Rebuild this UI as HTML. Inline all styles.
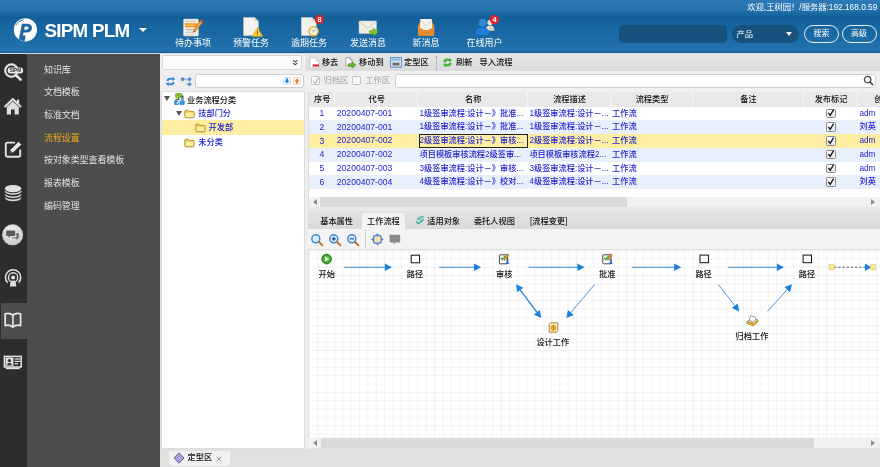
<!DOCTYPE html>
<html>
<head>
<meta charset="utf-8">
<title>SIPM PLM</title>
<style>
*{box-sizing:border-box;margin:0;padding:0}
html,body{width:880px;height:467px;overflow:hidden;background:#e4e4e4}
body{position:relative;font-family:"Liberation Sans","Noto Sans CJK SC",sans-serif;font-size:8.2px;color:#111;line-height:1;font-weight:500}
.a{position:absolute}
.t{position:absolute;white-space:nowrap;line-height:10px;height:10px}
/* header */
#hdr{left:0;top:0;width:880px;height:53px;background:linear-gradient(to bottom,#2d7ab6 0,#2773af 9px,#135f98 17px,#1968a3 31px,#2371ad 51px,#1c6097 52.4px,#1c6097 53px)}
#hline{left:0;top:53px;width:880px;height:1px;background:#cfe0ec}
.nav{position:absolute;font-weight:400;color:#fff;font-size:9px;line-height:10px;white-space:nowrap;top:37.6px;text-align:center}
/* sidebar */
#ibar{left:0;top:54px;width:27px;height:413px;background:#2d2d2d}
#menu{left:27px;top:54px;width:133px;height:413px;background:#4d4d4d}
.mi{position:absolute;font-weight:400;left:44px;font-size:9px;line-height:10px;color:#e2e2e2;white-space:nowrap;letter-spacing:-0.1px}
.blue{color:#1c1cd0}
.row{position:absolute;left:309px;width:571px;height:13.75px}
.row .t{top:2px}
.cb{position:absolute;left:826px;width:9.5px;height:9.5px;border:1px solid #8a8a8a;border-radius:1.5px;background:linear-gradient(#fff,#e6e6e6)}
.hd{position:absolute;top:92px;height:14.5px;background:#e9e9e9;border-right:1px solid #f6f6f6;text-align:center;line-height:16px;padding-left:1.6px;white-space:nowrap;overflow:hidden}
</style>
</head>
<body>
<div id="wrap" style="position:absolute;left:0;top:0;width:880px;height:467px;will-change:transform">
<!-- HEADER -->
<div class="a" id="hdr"></div>
<div class="a" id="hline"></div>
<!-- logo -->
<svg class="a" style="left:12px;top:16px" width="28" height="28" viewBox="0 0 28 28">
<circle cx="13.4" cy="13.8" r="11.6" fill="#fff"/>
<text x="7.4" y="21.4" font-family="Liberation Sans, sans-serif" font-size="18" font-weight="bold" font-style="italic" fill="#1f66a3" stroke="#1f66a3" stroke-width="0.7">P</text>
<path d="M8 19.6 L13.7 19.6 L12.5 25.6 L6.9 23.4 Z" fill="#1f66a3"/>
<path d="M3.6 9.2 Q6.6 4.6 11.4 3.6" stroke="#1f66a3" stroke-width="0.9" fill="none"/>
</svg>
<div class="a" style="left:44.5px;top:21px;font-size:18.8px;line-height:20px;font-weight:bold;color:#fff;white-space:nowrap;letter-spacing:-0.75px">SIPM PLM</div>
<div class="a" style="left:138.8px;top:28.2px;width:0;height:0;border-left:4.3px solid transparent;border-right:4.3px solid transparent;border-top:4.6px solid #fff"></div>
<!-- nav labels -->
<div class="nav" style="left:174.5px;width:37px">待办事项</div>
<div class="nav" style="left:232.5px;width:37px">预警任务</div>
<div class="nav" style="left:290.5px;width:37px">逾期任务</div>
<div class="nav" style="left:349.5px;width:37px">发送消息</div>
<div class="nav" style="left:412px;width:28px">新消息</div>
<div class="nav" style="left:466px;width:37px">在线用户</div>
<!-- nav icons -->
<svg class="a" style="left:182px;top:17px" width="24" height="22" viewBox="0 0 24 22">
<rect x="1.5" y="2" width="15" height="17" rx="1" fill="#f4f1ea" stroke="#c9c2b4" stroke-width="0.6"/>
<rect x="2.8" y="6.2" width="12.4" height="4.2" fill="#f59a23"/>
<line x1="3.5" y1="4.3" x2="14" y2="4.3" stroke="#b9b4a8" stroke-width="0.7"/>
<line x1="3.5" y1="8.3" x2="13" y2="8.3" stroke="#fbd9a6" stroke-width="0.7"/>
<line x1="3.5" y1="12.6" x2="11" y2="12.6" stroke="#8f8f8f" stroke-width="0.7"/>
<line x1="3.5" y1="15.2" x2="11" y2="15.2" stroke="#a8a8a8" stroke-width="0.7"/>
<line x1="3.5" y1="17.2" x2="12" y2="17.2" stroke="#c8c8c8" stroke-width="0.6"/>
<path d="M19.2 2.6 L21.4 4.4 L14 14 L11.6 15.2 L12 12.4 Z" fill="#f2a33a" stroke="#8a5a1c" stroke-width="0.5"/>
<path d="M19.2 2.6 L21.4 4.4 L20.3 5.8 L18.1 4 Z" fill="#d9362f"/>
<path d="M11.6 15.2 L12 13.6 L13 14.5 Z" fill="#333"/>
</svg>
<svg class="a" style="left:242px;top:16px" width="22" height="22" viewBox="0 0 22 22">
<path d="M1.6 1.4 L12.6 1.4 L16.4 5.2 L16.4 19.6 L1.6 19.6 Z" fill="#f3f2ee" stroke="#d4d2cc" stroke-width="0.5"/>
<path d="M12.6 1.4 L12.6 5.2 L16.4 5.2 Z" fill="#d9d7d0"/>
<path d="M15.4 11.6 L20.4 20.2 L10.4 20.2 Z" fill="#f7cf3c" stroke="#e0a820" stroke-width="0.8" stroke-linejoin="round"/>
<rect x="14.9" y="14.6" width="1" height="2.8" fill="#7a5a10"/>
<rect x="14.9" y="18" width="1" height="1" fill="#7a5a10"/>
</svg>
<svg class="a" style="left:300px;top:14px" width="26" height="24" viewBox="0 0 26 24">
<path d="M1.4 3.6 L12 3.6 L16.2 7.6 L16.2 21.6 L1.4 21.6 Z" fill="#f3f2ee" stroke="#d4d2cc" stroke-width="0.5"/>
<path d="M12 3.6 L12 7.6 L16.2 7.6 Z" fill="#d9d7d0"/>
<circle cx="13.6" cy="17.2" r="4.6" fill="#f2f0ea" stroke="#e8a423" stroke-width="1.4"/>
<path d="M11.8 15.6 L13.6 17.6 L15.6 15.8" stroke="#8a8a9a" stroke-width="0.9" fill="none"/>
<circle cx="19.4" cy="5.4" r="4.6" fill="#e0242b"/>
<text x="19.4" y="8" font-size="7.2" font-weight="bold" fill="#fff" text-anchor="middle" font-family="Liberation Sans, sans-serif">8</text>
</svg>
<svg class="a" style="left:358px;top:19px" width="22" height="18" viewBox="0 0 22 18">
<rect x="1" y="2" width="17.4" height="12.6" rx="0.8" fill="#f1efe9" stroke="#cfccc4" stroke-width="0.6"/>
<path d="M1.4 2.4 L9.7 9.4 L18 2.4" stroke="#c4c0b6" stroke-width="0.8" fill="none"/>
<path d="M1.4 14.2 L7.4 8.2 M18 14.2 L12 8.2" stroke="#dad7cf" stroke-width="0.6" fill="none"/>
<path d="M11.4 11.4 L15.4 11.4 L15.4 9 L20.2 13 L15.4 17 L15.4 14.6 L11.4 14.6 Z" fill="#7cc22a" stroke="#5a9a14" stroke-width="0.5"/>
</svg>
<svg class="a" style="left:416px;top:17px" width="20" height="20" viewBox="0 0 20 20">
<path d="M2 9 L2 17.4 Q2 18.8 3.4 18.8 L16.8 18.8 Q18.2 18.8 18.2 17.4 L18.2 9 L15.6 3 L4.6 3 Z" fill="#e8923a"/>
<path d="M4.2 3 Q4.2 2 5.2 2 L15 2 Q16 2 16 3 L16 13 L4.2 13 Z" fill="#f4f2ec"/>
<path d="M4.6 3 L10.1 9.6 L15.6 3" stroke="#d0cdc4" stroke-width="0.8" fill="none"/>
<path d="M2 11.4 L6.6 11.4 L7.8 13.6 L12.4 13.6 L13.6 11.4 L18.2 11.4 L18.2 17.4 Q18.2 18.8 16.8 18.8 L3.4 18.8 Q2 18.8 2 17.4 Z" fill="#e58a30"/>
</svg>
<svg class="a" style="left:474px;top:14px" width="28" height="24" viewBox="0 0 28 24">
<circle cx="16" cy="8.6" r="2.6" fill="#f1e6d6"/>
<path d="M11.6 16.4 Q11.8 11.6 16 11.6 Q20.2 11.6 20.4 16.4 Z" fill="#e9e4dc"/>
<rect x="15.4" y="13.4" width="4.4" height="3" fill="#d9cdb8"/>
<circle cx="8.6" cy="8.8" r="4" fill="#2f86d6"/>
<path d="M1.6 19.6 Q1.8 13.4 8.6 13.4 Q15.4 13.4 15.6 19.6 Q8.6 22.6 1.6 19.6 Z" fill="#1f7fd8"/>
<circle cx="20.4" cy="5.6" r="4.6" fill="#e0242b"/>
<text x="20.4" y="8.2" font-size="7.2" font-weight="bold" fill="#fff" text-anchor="middle" font-family="Liberation Sans, sans-serif">4</text>
</svg>
<!-- header right -->
<div class="a" style="right:2.7px;top:1.6px;font-weight:400;font-size:8.3px;line-height:10px;color:#fff;white-space:nowrap">欢迎,王树园！/服务器:192.168.0.59</div>
<div class="a" style="left:619px;top:25px;width:108px;height:18px;border-radius:5px;background:#17527f"></div>
<div class="a" style="left:732px;top:25px;width:67px;height:18px;border-radius:9px;background:#17527f"></div>
<div class="a" style="left:736.4px;top:29px;font-weight:400;font-size:8.3px;line-height:10px;color:#fff">产品</div>
<div class="a" style="left:786.2px;top:31.6px;width:0;height:0;border-left:3.9px solid transparent;border-right:3.9px solid transparent;border-top:4.8px solid #f2f2f2"></div>
<div class="a" style="left:804px;top:25px;width:35px;height:18px;border-radius:9px;border:1px solid #e8eef4;color:#fff;font-weight:400;font-size:8px;line-height:16px;text-align:center">搜索</div>
<div class="a" style="left:841.5px;top:25px;width:35px;height:18px;border-radius:9px;border:1px solid #e8eef4;color:#fff;font-weight:400;font-size:8px;line-height:16px;text-align:center">高级</div>
<!-- SIDEBAR -->
<div class="a" id="ibar"></div>
<div class="a" id="menu"></div>
<div class="a" style="left:1px;top:302.5px;width:26px;height:36.5px;background:#4d4d4d"></div>
<!-- sidebar icons -->
<svg class="a" style="left:2px;top:61px" width="24" height="21" viewBox="0 0 24 21">
<circle cx="9.4" cy="9.6" r="6.2" fill="none" stroke="#e4e4e4" stroke-width="2.2"/>
<line x1="14" y1="14.2" x2="18.6" y2="18.6" stroke="#e4e4e4" stroke-width="2.6" stroke-linecap="round"/>
<rect x="5.6" y="6.4" width="15.6" height="6" rx="3" fill="#e8e8e8"/>
<text x="13.4" y="11.2" font-size="4.6" font-weight="bold" fill="#333" text-anchor="middle" font-family="Liberation Sans, sans-serif">SIPM</text>
</svg>
<svg class="a" style="left:3px;top:97px" width="20" height="19" viewBox="0 0 20 19">
<path d="M1.6 10 L9.8 2.2 L18 10" stroke="#e0e0e0" stroke-width="2.2" fill="none" stroke-linejoin="miter"/>
<path d="M3.8 10 L9.8 4.6 L15.8 10 L15.8 17.6 L11.6 17.6 L11.6 12.4 L8 12.4 L8 17.6 L3.8 17.6 Z" fill="#e0e0e0"/>
<rect x="14" y="2.6" width="2.2" height="4" fill="#e0e0e0"/>
</svg>
<svg class="a" style="left:3px;top:139px" width="21" height="20" viewBox="0 0 21 20">
<path d="M12 3.6 L4.6 3.6 Q2.8 3.6 2.8 5.4 L2.8 16 Q2.8 17.8 4.6 17.8 L15.4 17.8 Q17.2 17.8 17.2 16 L17.2 10.6" stroke="#e4e4e4" stroke-width="1.9" fill="none"/>
<path d="M15.4 2.4 L18.8 5.6 L10.4 13.6 L6.4 14.8 L7.4 10.6 Z" fill="#e4e4e4" stroke="#2b2b2b" stroke-width="0.7"/>
<path d="M7.2 14 L7.8 11.8 L9.4 13.4 Z" fill="#2b2b2b"/>
</svg>
<svg class="a" style="left:3px;top:183px" width="20" height="20" viewBox="0 0 20 20">
<ellipse cx="10.1" cy="14.6" rx="8.2" ry="3.6" fill="#d8d8d8"/>
<ellipse cx="10.1" cy="13.2" rx="8.2" ry="3.4" fill="#2b2b2b"/>
<ellipse cx="10.1" cy="11.4" rx="8.2" ry="3.6" fill="#d8d8d8"/>
<ellipse cx="10.1" cy="10" rx="8.2" ry="3.4" fill="#2b2b2b"/>
<ellipse cx="10.1" cy="8.2" rx="8.2" ry="3.6" fill="#d8d8d8"/>
<ellipse cx="10.1" cy="6.8" rx="8.2" ry="3.4" fill="#2b2b2b"/>
<ellipse cx="10.1" cy="5.6" rx="8.2" ry="3.6" fill="#e2e2e2"/>
</svg>
<svg class="a" style="left:1px;top:223px" width="24" height="24" viewBox="0 0 24 24">
<defs><radialGradient id="cg" cx="0.45" cy="0.35" r="0.7"><stop offset="0" stop-color="#f4f4f4"/><stop offset="1" stop-color="#c4c4c4"/></radialGradient></defs>
<circle cx="11.6" cy="11.8" r="10.5" fill="url(#cg)"/>
<path d="M6 7.4 L13.4 7.4 Q14.2 7.4 14.2 8.2 L14.2 12.2 Q14.2 13 13.4 13 L9.6 13 L7.6 15 L7.6 13 L6 13 Q5.2 13 5.2 12.2 L5.2 8.2 Q5.2 7.4 6 7.4 Z" fill="#5a5a5a"/>
<path d="M15.4 10 L17 10 Q17.8 10 17.8 10.8 L17.8 14.4 Q17.8 15.2 17 15.2 L16.2 15.2 L16.2 17 L14.4 15.2 L11.4 15.2 L11.4 14.2 L15.4 14.2 Z" fill="#6a6a6a"/>
</svg>
<svg class="a" style="left:3px;top:267px" width="20" height="21" viewBox="0 0 20 21">
<circle cx="10.1" cy="10.4" r="7.6" fill="none" stroke="#e0e0e0" stroke-width="1.6"/>
<circle cx="10.1" cy="10.4" r="4.6" fill="none" stroke="#e0e0e0" stroke-width="1.4"/>
<rect x="4.6" y="15" width="11" height="6" fill="#2b2b2b"/>
<circle cx="10.1" cy="10.6" r="2" fill="#e0e0e0"/>
<path d="M6.8 19.4 L7.6 14.6 Q7.8 13.4 10.1 13.4 Q12.4 13.4 12.6 14.6 L13.4 19.4 Z" fill="#e0e0e0"/>
</svg>
<svg class="a" style="left:3px;top:310px" width="20" height="20" viewBox="0 0 20 20">
<path d="M2.2 3.8 Q6.4 2.4 9.9 5 Q13.4 2.4 17.6 3.8 L17.6 15.6 Q13.4 14.4 9.9 17 Q6.4 14.4 2.2 15.6 Z" fill="none" stroke="#e8e8e8" stroke-width="1.7" stroke-linejoin="round"/>
<line x1="9.9" y1="5" x2="9.9" y2="17.4" stroke="#e8e8e8" stroke-width="1.6"/>
</svg>
<svg class="a" style="left:3px;top:355px" width="20" height="16" viewBox="0 0 20 16">
<rect x="1.4" y="1.4" width="16.8" height="10.6" fill="none" stroke="#e6e6e6" stroke-width="1.5"/>
<rect x="2.6" y="2.6" width="7.8" height="8.4" fill="#e6e6e6"/>
<circle cx="6.4" cy="5.6" r="1.7" fill="#3a3a3a"/>
<path d="M3.8 10.4 Q4 7.8 6.4 7.8 Q8.8 7.8 9 10.4 Z" fill="#3a3a3a"/>
<rect x="11.6" y="3.4" width="5.6" height="1.2" fill="#e6e6e6"/>
<rect x="11.6" y="5.8" width="5.6" height="1.2" fill="#e6e6e6"/>
<rect x="11.6" y="8.2" width="3.6" height="1.2" fill="#e6e6e6"/>
<rect x="3" y="12.6" width="13.6" height="1.6" fill="#e6e6e6"/>
</svg>
<!-- menu text -->
<div class="mi" style="top:64.5px">知识库</div>
<div class="mi" style="top:87.2px">文档模板</div>
<div class="mi" style="top:109.9px">标准文档</div>
<div class="mi" style="top:132.6px;color:#f2a91c">流程设置</div>
<div class="mi" style="top:155.3px">按对象类型查看模板</div>
<div class="mi" style="top:178px">报表模板</div>
<div class="mi" style="top:200.7px">编码管理</div>
<!-- MAIN -->
<div class="a" id="main"></div>
<!-- left panel -->
<div class="a" style="left:160px;top:54px;width:145px;height:38px;background:#eee"></div>
<div class="a" style="left:162.4px;top:55px;width:140px;height:14.7px;background:#fbfbfb;border:1px solid #d6d6d6;border-radius:2px"></div>
<svg class="a" style="left:292.2px;top:59.3px" width="6.8" height="7.6" viewBox="0 0 8 9"><path d="M1.2 1.2 L3.8 3.6 L6.4 1.2 M1.2 4.6 L3.8 7 L6.4 4.6" stroke="#4a4a4a" stroke-width="1.2" fill="none"/></svg>
<svg class="a" style="left:165px;top:75.5px" width="11" height="11" viewBox="0 0 11 11">
<path d="M1.4 4.6 Q2.4 1.6 5.6 1.8 L7.4 2.2 L7.4 0.6 L10 3.2 L7.4 5 L7.4 3.8 Q4.4 3 3 5.2 Z" fill="#2b86e0"/>
<path d="M9.6 6.4 Q8.6 9.4 5.4 9.2 L3.6 8.8 L3.6 10.4 L1 7.8 L3.6 6 L3.6 7.2 Q6.6 8 8 5.8 Z" fill="#2b86e0"/>
</svg>
<svg class="a" style="left:180px;top:75.5px" width="12" height="11" viewBox="0 0 12 11">
<path d="M3.6 3.2 L8.4 3.2 M6 3.2 L6 8.2 L8.4 8.2" stroke="#9ab0c8" stroke-width="0.8" fill="none"/>
<rect x="5.2" y="4.4" width="2.6" height="3.6" fill="#e2e2e2"/>
<circle cx="2.6" cy="3.2" r="1.5" fill="#5a94e4" stroke="#2f6cc8" stroke-width="0.6"/>
<circle cx="9.5" cy="3.2" r="1.5" fill="#5a94e4" stroke="#2f6cc8" stroke-width="0.6"/>
<circle cx="9.5" cy="8.2" r="1.5" fill="#5a94e4" stroke="#2f6cc8" stroke-width="0.6"/>
</svg>
<div class="a" style="left:194.6px;top:73.7px;width:109px;height:14px;background:#fff;border:1px solid #cdcdcd;border-radius:3px"></div>
<svg class="a" style="left:282.6px;top:77px" width="8" height="8" viewBox="0 0 8 8"><rect x="0.4" y="0.4" width="7.2" height="7.2" rx="1" fill="#eef4fb" stroke="#b9c9dc" stroke-width="0.6"/><path d="M3 1.4 L5 1.4 L5 3.8 L6.4 3.8 L4 6.6 L1.6 3.8 L3 3.8 Z" fill="#1e88e0"/></svg>
<svg class="a" style="left:293px;top:77px" width="8" height="8" viewBox="0 0 8 8"><rect x="0.4" y="0.4" width="7.2" height="7.2" rx="1" fill="#fdf3ea" stroke="#dcc9b9" stroke-width="0.6"/><path d="M3 6.6 L5 6.6 L5 4.2 L6.4 4.2 L4 1.4 L1.6 4.2 L3 4.2 Z" fill="#f57a14"/></svg>
<!-- tree -->
<div class="a" style="left:161px;top:91px;width:143.6px;height:357.5px;background:#fff;border:1px solid #dcdcdc"></div>
<div class="a" style="left:161.8px;top:120px;width:142px;height:14.6px;background:#fdeea2"></div>
<div class="a" style="left:164.1px;top:96.2px;width:0;height:0;border-left:3.2px solid transparent;border-right:3.2px solid transparent;border-top:5.4px solid #555"></div>
<div class="a" style="left:175.7px;top:110.5px;width:0;height:0;border-left:3.2px solid transparent;border-right:3.2px solid transparent;border-top:5.4px solid #555"></div>
<svg class="a" style="left:173.6px;top:93px" width="11" height="12.4" viewBox="0 0 11 12.4">
<rect x="1.5" y="0.5" width="6.4" height="4.3" rx="1" fill="#84cc2e" stroke="#4f9a1c" stroke-width="0.6"/>
<rect x="2.8" y="1.7" width="3.6" height="0.9" fill="#5aa81e"/>
<path d="M4.6 4.8 L4.6 6.4 L1.8 6.4 L1.8 7.6 M4.6 6.4 L8 6.4 L8 3 L9 3 L9 7.6" stroke="#2a2a3a" stroke-width="0.8" fill="none"/>
<rect x="0.5" y="7.7" width="4.3" height="4" rx="0.6" fill="#2f9ae8" stroke="#1a6fc0" stroke-width="0.5"/>
<rect x="6" y="7.7" width="4.3" height="4" rx="0.6" fill="#2f9ae8" stroke="#1a6fc0" stroke-width="0.5"/>
<path d="M3 10.6 L7.4 5.4" stroke="#f4f6fa" stroke-width="1.2"/>
</svg>
<div class="t" style="left:187px;top:95.5px">业务流程分类</div>
<svg class="a" style="left:184.4px;top:109px" width="11" height="10" viewBox="0 0 11 10"><path d="M0.8 2.2 Q0.8 1.2 1.8 1.2 L4 1.2 L5 2.4 L9.2 2.4 Q10.2 2.4 10.2 3.4 L10.2 7.8 Q10.2 8.8 9.2 8.8 L1.8 8.8 Q0.8 8.8 0.8 7.8 Z" fill="#efcf58" stroke="#b48c24" stroke-width="0.9"/><rect x="1.7" y="3.7" width="7.6" height="4.3" rx="0.6" fill="#fbeb9c"/></svg>
<div class="t blue" style="left:198.3px;top:109.3px">技部门分</div>
<svg class="a" style="left:195px;top:123.4px" width="11" height="10" viewBox="0 0 11 10"><path d="M0.8 2.2 Q0.8 1.2 1.8 1.2 L4 1.2 L5 2.4 L9.2 2.4 Q10.2 2.4 10.2 3.4 L10.2 7.8 Q10.2 8.8 9.2 8.8 L1.8 8.8 Q0.8 8.8 0.8 7.8 Z" fill="#efcf58" stroke="#b48c24" stroke-width="0.9"/><rect x="1.7" y="3.7" width="7.6" height="4.3" rx="0.6" fill="#fbeb9c"/></svg>
<div class="t blue" style="left:208.6px;top:123.4px">开发部</div>
<svg class="a" style="left:184.4px;top:137.8px" width="11" height="10" viewBox="0 0 11 10"><path d="M0.8 2.2 Q0.8 1.2 1.8 1.2 L4 1.2 L5 2.4 L9.2 2.4 Q10.2 2.4 10.2 3.4 L10.2 7.8 Q10.2 8.8 9.2 8.8 L1.8 8.8 Q0.8 8.8 0.8 7.8 Z" fill="#efcf58" stroke="#b48c24" stroke-width="0.9"/><rect x="1.7" y="3.7" width="7.6" height="4.3" rx="0.6" fill="#fbeb9c"/></svg>
<div class="t blue" style="left:198.3px;top:137.9px">未分类</div>
<!-- right toolbar -->
<div class="a" style="left:305px;top:54px;width:575px;height:17px;background:linear-gradient(#e5e5e5,#dbdbdb)"></div>
<div class="a" style="left:305px;top:71px;width:575px;height:20.5px;background:#f0f0f0"></div>
<div class="a" style="left:303.6px;top:54px;width:1.4px;height:17px;background:#f4f4f4"></div>
<svg class="a" style="left:309px;top:57px" width="11" height="12" viewBox="0 0 11 12"><path d="M1 0.8 L7 0.8 L9.8 3.6 L9.8 11 L1 11 Z" fill="#fff" stroke="#b8b8b8" stroke-width="0.7"/><path d="M7 0.8 L7 3.6 L9.8 3.6" fill="#e4e4e4" stroke="#b8b8b8" stroke-width="0.6"/><rect x="3.6" y="7.4" width="6.4" height="2.2" fill="#e02a2a"/></svg>
<div class="t" style="left:321.9px;top:58px">移去</div>
<svg class="a" style="left:345px;top:57px" width="12" height="12" viewBox="0 0 12 12"><path d="M0.8 0.6 L4.8 0.6 L7 2.8 L7 8.4 L0.8 8.4 Z" fill="#fff" stroke="#8a8a8a" stroke-width="0.7"/><path d="M4.8 0.6 L4.8 2.8 L7 2.8" fill="none" stroke="#8a8a8a" stroke-width="0.6"/><path d="M3.4 6.8 L7 6.8 L7 4.8 L10.8 8 L7 11.2 L7 9.2 L3.4 9.2 Z" fill="#5fc224" stroke="#2f7a10" stroke-width="0.6"/></svg>
<div class="t" style="left:359px;top:58px">移动到</div>
<svg class="a" style="left:390px;top:57px" width="12" height="11" viewBox="0 0 12 11"><rect x="0.6" y="0.6" width="10.8" height="9.6" fill="#dbe9f8" stroke="#4a86c8" stroke-width="0.9"/><rect x="1.6" y="1.6" width="8.8" height="2" fill="#7fb2e6"/><rect x="2" y="5" width="8" height="4.4" fill="#b8b8b8"/><rect x="3" y="6" width="6" height="2.2" fill="#6a6a6a"/></svg>
<div class="t" style="left:404px;top:58px">定型区</div>
<div class="a" style="left:436px;top:56px;width:0;height:14px;border-left:1px dotted #9a9a9a"></div>
<svg class="a" style="left:442px;top:57.4px" width="11" height="11" viewBox="0 0 11 11">
<path d="M1.2 4.8 Q2.2 1.4 5.6 1.6 L7.2 2 L7.2 0.4 L10 3.2 L7.2 5.2 L7.2 3.9 Q4.4 3 3.2 5.4 Z" fill="#3fb838"/>
<path d="M9.8 6.2 Q8.8 9.6 5.4 9.4 L3.8 9 L3.8 10.6 L1 7.8 L3.8 5.8 L3.8 7.1 Q6.6 8 7.8 5.6 Z" fill="#3fb838"/>
</svg>
<div class="t" style="left:456px;top:58px">刷新</div>
<div class="t" style="left:479.6px;top:58px">导入流程</div>
<!-- filter row -->
<div class="a" style="left:311.2px;top:76.3px;width:9px;height:9px;border:1px solid #c2c2c2;border-radius:1.5px;background:#f8f8f8"><svg width="8" height="8" viewBox="0 0 8 8" style="position:absolute;left:-0.3px;top:-0.8px"><path d="M1.4 3.8 L3.2 6.4 L6.6 0.6" stroke="#b4b4b4" stroke-width="1.1" fill="none"/></svg></div>
<div class="t" style="left:323.7px;top:76px;color:#b0b0b0">归档区</div>
<div class="a" style="left:352.3px;top:76.3px;width:9px;height:9px;border:1px solid #c2c2c2;border-radius:1.5px;background:#f8f8f8"></div>
<div class="t" style="left:365.4px;top:76px;color:#b0b0b0">工作区</div>
<div class="a" style="left:394.5px;top:73.6px;width:481px;height:14px;background:#fff;border:1px solid #cdcdcd;border-radius:3px"></div>
<svg class="a" style="left:863px;top:75.4px" width="11" height="11" viewBox="0 0 11 11"><circle cx="4.6" cy="4.6" r="3.2" fill="none" stroke="#444" stroke-width="1.3"/><line x1="7" y1="7" x2="9.6" y2="9.6" stroke="#444" stroke-width="1.7" stroke-linecap="round"/></svg>
<div class="a" style="left:305px;top:91.5px;width:3.6px;height:357.5px;background:#eee"></div>
<!-- table -->
<div class="a" style="left:308.4px;top:91.5px;width:572px;height:116px;background:#fff;border:1px solid #dcdcdc;border-right:0"></div>
<div class="a" style="left:309px;top:92px;width:571px;height:14.5px;background:#e9e9e9"></div>
<div class="hd" style="left:309px;width:26px">序号</div><div class="hd" style="left:335px;width:83px">代号</div><div class="hd" style="left:418px;width:110px">名称</div><div class="hd" style="left:528px;width:82.5px">流程描述</div><div class="hd" style="left:610.5px;width:82.5px">流程类型</div><div class="hd" style="left:693px;width:110.5px">备注</div><div class="hd" style="left:803.5px;width:54.5px">发布标记</div><div class="hd" style="left:858px;width:55.6px;border-right:0">创建者</div>

<div class="row blue" style="top:106.5px;background:#fff"><div class="t" style="left:0;width:26px;text-align:center;font-size:8.6px;top:1.6px">1</div><div class="t" style="left:27.8px;font-size:8.6px;top:1.4px">20200407-001</div><div class="t" style="left:110.5px">1级签审流程:设计－》批准...</div><div class="t" style="left:220.4px">1级签审流程:设计－...</div><div class="t" style="left:303px">工作流</div><div class="t" style="left:550.5px">adm</div></div>
<div class="cb" style="top:108.7px"><svg width="8" height="8" viewBox="0 0 8 8" style="position:absolute;left:0;top:-0.5px"><path d="M1.4 3.8 L3.2 6.4 L6.6 0.6" stroke="#111" stroke-width="1.3" fill="none"/></svg></div>
<div class="row blue" style="top:120.25px;background:#e8f0fb"><div class="t" style="left:0;width:26px;text-align:center;font-size:8.6px;top:1.6px">2</div><div class="t" style="left:27.8px;font-size:8.6px;top:1.4px">20200407-001</div><div class="t" style="left:110.5px">1级签审流程:设计－》批准...</div><div class="t" style="left:220.4px">1级签审流程:设计－...</div><div class="t" style="left:303px">工作流</div><div class="t" style="left:550.5px">刘英</div></div>
<div class="cb" style="top:122.45px"><svg width="8" height="8" viewBox="0 0 8 8" style="position:absolute;left:0;top:-0.5px"><path d="M1.4 3.8 L3.2 6.4 L6.6 0.6" stroke="#111" stroke-width="1.3" fill="none"/></svg></div>
<div class="row blue" style="top:134.0px;background:#fdeea2"><div class="t" style="left:0;width:26px;text-align:center;font-size:8.6px;top:1.6px">3</div><div class="t" style="left:27.8px;font-size:8.6px;top:1.4px">20200407-002</div><div class="t" style="left:110.5px">2级签审流程:设计－》审核...</div><div class="t" style="left:220.4px">2级签审流程:设计－...</div><div class="t" style="left:303px">工作流</div><div class="t" style="left:550.5px">adm</div></div>
<div class="cb" style="top:136.2px"><svg width="8" height="8" viewBox="0 0 8 8" style="position:absolute;left:0;top:-0.5px"><path d="M1.4 3.8 L3.2 6.4 L6.6 0.6" stroke="#111" stroke-width="1.3" fill="none"/></svg></div>
<div class="row blue" style="top:147.75px;background:#e8f0fb"><div class="t" style="left:0;width:26px;text-align:center;font-size:8.6px;top:1.6px">4</div><div class="t" style="left:27.8px;font-size:8.6px;top:1.4px">20200407-002</div><div class="t" style="left:110.5px">项目模板审核流程2级签审...</div><div class="t" style="left:220.4px">项目模板审核流程2...</div><div class="t" style="left:303px">工作流</div><div class="t" style="left:550.5px">adm</div></div>
<div class="cb" style="top:149.95px"><svg width="8" height="8" viewBox="0 0 8 8" style="position:absolute;left:0;top:-0.5px"><path d="M1.4 3.8 L3.2 6.4 L6.6 0.6" stroke="#111" stroke-width="1.3" fill="none"/></svg></div>
<div class="row blue" style="top:161.5px;background:#fff"><div class="t" style="left:0;width:26px;text-align:center;font-size:8.6px;top:1.6px">5</div><div class="t" style="left:27.8px;font-size:8.6px;top:1.4px">20200407-003</div><div class="t" style="left:110.5px">3级签审流程:设计－》审核...</div><div class="t" style="left:220.4px">3级签审流程:设计－...</div><div class="t" style="left:303px">工作流</div><div class="t" style="left:550.5px">adm</div></div>
<div class="cb" style="top:163.7px"><svg width="8" height="8" viewBox="0 0 8 8" style="position:absolute;left:0;top:-0.5px"><path d="M1.4 3.8 L3.2 6.4 L6.6 0.6" stroke="#111" stroke-width="1.3" fill="none"/></svg></div>
<div class="row blue" style="top:175.25px;background:#e8f0fb"><div class="t" style="left:0;width:26px;text-align:center;font-size:8.6px;top:1.6px">6</div><div class="t" style="left:27.8px;font-size:8.6px;top:1.4px">20200407-004</div><div class="t" style="left:110.5px">4级签审流程:设计－》校对...</div><div class="t" style="left:220.4px">4级签审流程:设计－...</div><div class="t" style="left:303px">工作流</div><div class="t" style="left:550.5px">刘英</div></div>
<div class="cb" style="top:177.45px"><svg width="8" height="8" viewBox="0 0 8 8" style="position:absolute;left:0;top:-0.5px"><path d="M1.4 3.8 L3.2 6.4 L6.6 0.6" stroke="#111" stroke-width="1.3" fill="none"/></svg></div>

<div class="a" style="left:419px;top:134.4px;width:109.2px;height:13.4px;border:1px solid #222"></div>
<!-- table hscroll -->
<div class="a" style="left:309px;top:196.5px;width:571px;height:10.3px;background:#f1f1f1"></div>
<div class="a" style="left:320px;top:196.5px;width:307px;height:10.3px;background:#dadada"></div>
<div class="a" style="left:312.6px;top:198.6px;width:0;height:0;border-top:3px solid transparent;border-bottom:3px solid transparent;border-right:4.8px solid #8a8a8a"></div>
<div class="a" style="left:871px;top:198.6px;width:0;height:0;border-top:3px solid transparent;border-bottom:3px solid transparent;border-left:4.8px solid #8a8a8a"></div>
<!-- tabs -->
<div class="a" style="left:308.4px;top:207px;width:572px;height:4px;background:#eaeaea"></div>
<div class="a" style="left:308.4px;top:210.7px;width:572px;height:18px;background:linear-gradient(#e3e3e3,#dadada)"></div>
<div class="a" style="left:361.6px;top:212.6px;width:43.8px;height:16px;background:#f3f3f3;border-radius:3px 3px 0 0"></div>
<div class="t" style="left:320.2px;top:216.8px">基本属性</div>
<div class="t" style="left:367px;top:216.8px">工作流程</div>
<svg class="a" style="left:414.6px;top:215.4px" width="10" height="10" viewBox="0 0 10 10"><path d="M1 6.4 L3.4 8.6 L9 4.4" stroke="#35b0a0" stroke-width="1.5" fill="none"/><path d="M2 4.2 L4 2.2 L8.6 1.2 L5.4 5 Z" fill="#7fd8c8" stroke="#2a9a8a" stroke-width="0.6"/></svg>
<div class="t" style="left:427.3px;top:216.8px">适用对象</div>
<div class="t" style="left:473.9px;top:216.8px">委托人视图</div>
<div class="t" style="left:530px;top:216.8px">[流程变更]</div>
<!-- canvas toolbar -->
<div class="a" style="left:308.4px;top:228.6px;width:572px;height:20px;background:#f3f3f3"></div>
<!-- canvas -->
<div class="a" style="left:308.4px;top:248.6px;width:572px;height:190px;background-color:#fff;background-image:linear-gradient(to right,#f2f2f2 1px,transparent 1px),linear-gradient(to bottom,#f2f2f2 1px,transparent 1px);background-size:8.35px 8.35px;border-top:1px solid #e0e0e0;border-left:1px solid #e0e0e0"></div>
<!-- canvas tools -->
<svg class="a" style="left:310px;top:233px" width="14" height="14" viewBox="0 0 14 14"><circle cx="5.8" cy="5.8" r="4" fill="#d8ecfb" stroke="#3a8ad8" stroke-width="1.5"/><line x1="9" y1="9" x2="12.4" y2="12.4" stroke="#b8742a" stroke-width="2" stroke-linecap="round"/></svg>
<svg class="a" style="left:328px;top:233px" width="14" height="14" viewBox="0 0 14 14"><circle cx="5.8" cy="5.8" r="4" fill="#d8ecfb" stroke="#3a8ad8" stroke-width="1.5"/><path d="M3.8 5.8 L7.8 5.8 M5.8 3.8 L5.8 7.8" stroke="#1a4a8a" stroke-width="1.2"/><line x1="9" y1="9" x2="12.4" y2="12.4" stroke="#b8742a" stroke-width="2" stroke-linecap="round"/></svg>
<svg class="a" style="left:346.4px;top:233px" width="14" height="14" viewBox="0 0 14 14"><circle cx="5.8" cy="5.8" r="4" fill="#d8ecfb" stroke="#3a8ad8" stroke-width="1.5"/><path d="M3.8 5.8 L7.8 5.8" stroke="#1a4a8a" stroke-width="1.2"/><line x1="9" y1="9" x2="12.4" y2="12.4" stroke="#b8742a" stroke-width="2" stroke-linecap="round"/></svg>
<div class="a" style="left:365px;top:230px;width:0;height:17px;border-left:1px dotted #a8a8a8"></div>
<svg class="a" style="left:371px;top:233px" width="13" height="13" viewBox="0 0 13 13"><rect x="2.6" y="2.6" width="7.6" height="7.6" rx="1.4" fill="#f6dfb0" stroke="#3a7ad8" stroke-width="1.2"/><path d="M6.4 0.2 L7.8 2 L5 2 Z M6.4 12.6 L7.8 10.8 L5 10.8 Z M0.2 6.4 L2 5 L2 7.8 Z M12.6 6.4 L10.8 5 L10.8 7.8 Z" fill="#3a7ad8"/></svg>
<svg class="a" style="left:389px;top:234px" width="12" height="12" viewBox="0 0 12 12"><path d="M1.4 0.8 L10.4 0.8 Q11.2 0.8 11.2 1.6 L11.2 7.6 Q11.2 8.4 10.4 8.4 L6.4 8.4 L4.6 10.6 L4.6 8.4 L1.4 8.4 Q0.6 8.4 0.6 7.6 L0.6 1.6 Q0.6 0.8 1.4 0.8 Z" fill="#8a8a8a"/></svg>
<!-- flow -->
<svg class="a" style="left:308px;top:248px;font-family:'Liberation Sans','Noto Sans CJK SC',sans-serif" width="572" height="190" viewBox="0 0 572 190"><line x1="36.2" y1="19.3" x2="76.8" y2="19.3" stroke="#1c80da" stroke-width="0.9"/><path d="M84.0 19.3 L76.8 23.1 L76.8 15.5 Z" fill="#1c80da"/><line x1="131.2" y1="19.3" x2="166.0" y2="19.3" stroke="#1c80da" stroke-width="0.9"/><path d="M173.2 19.3 L166.0 23.1 L166.0 15.5 Z" fill="#1c80da"/><line x1="220.6" y1="19.3" x2="269.4" y2="19.3" stroke="#1c80da" stroke-width="0.9"/><path d="M276.6 19.3 L269.4 23.1 L269.4 15.5 Z" fill="#1c80da"/><line x1="323.8" y1="19.3" x2="366.1" y2="19.3" stroke="#1c80da" stroke-width="0.9"/><path d="M373.3 19.3 L366.1 23.1 L366.1 15.5 Z" fill="#1c80da"/><line x1="420.2" y1="19.3" x2="468.8" y2="19.3" stroke="#1c80da" stroke-width="0.9"/><path d="M476.0 19.3 L468.8 23.1 L468.8 15.5 Z" fill="#1c80da"/><path d="M208.0 36.3 L209.3 44.3 L215.4 39.8 Z" fill="#1c80da"/><line x1="212.3" y1="42.1" x2="228.9" y2="64.2" stroke="#1c80da" stroke-width="1.3"/><path d="M233.2 70.0 L225.8 66.5 L231.9 62.0 Z" fill="#1c80da"/><line x1="286.8" y1="36.3" x2="262.9" y2="64.5" stroke="#1c80da" stroke-width="0.8"/><path d="M258.2 70.0 L260.0 62.1 L265.8 67.0 Z" fill="#1c80da"/><line x1="410.2" y1="36.3" x2="426.8" y2="57.7" stroke="#1c80da" stroke-width="0.8"/><path d="M431.2 63.4 L423.8 60.0 L429.8 55.4 Z" fill="#1c80da"/><line x1="459.5" y1="63.4" x2="479.2" y2="41.6" stroke="#1c80da" stroke-width="0.8"/><path d="M484.0 36.3 L482.0 44.2 L476.4 39.1 Z" fill="#1c80da"/><line x1="526" y1="19.300" x2="558" y2="19.300" stroke="#3a3a3a" stroke-width="0.8" stroke-dasharray="2.4 1.8"/><path d="M563.5 19.300 L557 15.600 L557 23 Z" fill="#1c80da"/><rect x="521" y="16.600" width="5.2" height="5.2" fill="#fbe9a0" stroke="#d8c060" stroke-width="0.5"/><rect x="562.6" y="16.600" width="5.2" height="5.2" fill="#fbe9a0" stroke="#d8c060" stroke-width="0.5"/><circle cx="18.6" cy="11" r="4.9" fill="#3a9e2c" stroke="#2a7a1e" stroke-width="0.8"/><circle cx="18.6" cy="11" r="3.3" fill="#4cb83c"/><path d="M17.1 8.4 L21.2 11 L17.1 13.6 Z" fill="#fff"/><text x="18.8" y="29.0" font-size="8.2" text-anchor="middle" fill="#111">开始</text><rect x="103.2" y="7.2" width="8.4" height="7.6" fill="#fff" stroke="#111" stroke-width="1"/><text x="107.0" y="29.0" font-size="8.2" text-anchor="middle" fill="#111">路径</text><g transform="translate(190.8,5.4)"><rect x="0.6" y="1.4" width="8.2" height="9" rx="0.8" fill="#fff" stroke="#333" stroke-width="0.9"/><path d="M2 4.4 L3.6 6.2 L6.4 2.4" stroke="#2ea82a" stroke-width="1.3" fill="none"/><path d="M8.6 0.4 L10.2 1.6 L6.6 6.4 L5.2 7 L5.4 5.4 Z" fill="#e8a030" stroke="#5a3a10" stroke-width="0.4"/><circle cx="8.6" cy="7" r="1.2" fill="#3a6ad0"/><path d="M6.8 10.6 Q7 8.4 8.6 8.4 Q10.2 8.4 10.4 10.6 Z" fill="#3a6ad0"/></g><text x="196.2" y="29.0" font-size="8.2" text-anchor="middle" fill="#111">审核</text><g transform="translate(294.2,5.4)"><rect x="0.6" y="1.4" width="8.2" height="9" rx="0.8" fill="#fff" stroke="#333" stroke-width="0.9"/><path d="M2 4.4 L3.6 6.2 L6.4 2.4" stroke="#2ea82a" stroke-width="1.3" fill="none"/><path d="M8.6 0.4 L10.2 1.6 L6.6 6.4 L5.2 7 L5.4 5.4 Z" fill="#e8a030" stroke="#5a3a10" stroke-width="0.4"/><circle cx="8.6" cy="7" r="1.2" fill="#3a6ad0"/><path d="M6.8 10.6 Q7 8.4 8.6 8.4 Q10.2 8.4 10.4 10.6 Z" fill="#3a6ad0"/></g><text x="299.2" y="29.0" font-size="8.2" text-anchor="middle" fill="#111">批准</text><rect x="392.0" y="7.1" width="8.4" height="7.6" fill="#fff" stroke="#111" stroke-width="1"/><text x="395.6" y="29.0" font-size="8.2" text-anchor="middle" fill="#111">路径</text><rect x="495.1" y="7.1" width="8.4" height="7.6" fill="#fff" stroke="#111" stroke-width="1"/><text x="499.0" y="29.0" font-size="8.2" text-anchor="middle" fill="#111">路径</text><g transform="translate(240.0,73.8)"><path d="M2.6 1 L9.8 1 L9.8 9 L8.4 10.4 L1.2 10.4 L1.2 2.4 Z" fill="#fdf0c0" stroke="#8a6a20" stroke-width="0.8"/><circle cx="5.4" cy="6" r="2.6" fill="#f7c030" stroke="#c07a10" stroke-width="0.7"/><path d="M4.2 5.6 L5.6 4.4 L5.6 7.6" stroke="#a05a08" stroke-width="0.7" fill="none"/></g><text x="244.8" y="97.0" font-size="8.2" text-anchor="middle" fill="#111">设计工作</text><g transform="translate(438.2,67.0)"><path d="M0.8 6.6 L7.4 8.8 L11.6 4.8 L11.6 7 L7.4 10.8 L0.8 8.6 Z" fill="#f2c020" stroke="#8a6a10" stroke-width="0.6"/><path d="M0.8 6.6 L5.4 3 L11.6 4.8 L7.4 8.8 Z" fill="#fdf0b0" stroke="#8a6a10" stroke-width="0.6"/><path d="M3 5.4 L4.4 0.8 L8.6 1.8 L9.6 4.6 L6.6 7 Z" fill="#fff" stroke="#555" stroke-width="0.6"/></g><text x="444.0" y="90.6" font-size="8.2" text-anchor="middle" fill="#111">归档工作</text></svg>
<!-- canvas hscroll -->
<div class="a" style="left:308.4px;top:438.4px;width:572px;height:10px;background:#f1f1f1"></div>
<div class="a" style="left:320.5px;top:438.4px;width:493px;height:10px;background:#dadada"></div>
<div class="a" style="left:312.6px;top:440.4px;width:0;height:0;border-top:3px solid transparent;border-bottom:3px solid transparent;border-right:4.8px solid #8a8a8a"></div>
<div class="a" style="left:871px;top:440.4px;width:0;height:0;border-top:3px solid transparent;border-bottom:3px solid transparent;border-left:4.8px solid #8a8a8a"></div>
<!-- bottom bar -->
<div class="a" style="left:160px;top:449px;width:720px;height:18px;background:#e0e0e0"></div>
<div class="a" style="left:168.6px;top:450.6px;width:61px;height:15.4px;background:#f1f1f1;border-radius:0 0 3px 3px"></div>
<svg class="a" style="left:173px;top:452.4px" width="12" height="12" viewBox="0 0 12 12"><path d="M6 0.8 L11 6 L6 11.2 L1 6 Z" fill="#a7a3dc" stroke="#4a4a7a" stroke-width="0.8"/></svg>
<div class="t" style="left:187.5px;top:453.4px">定型区</div>
<svg class="a" style="left:216px;top:455.6px" width="6" height="6" viewBox="0 0 6 6"><path d="M0.8 0.8 L5.2 5.2 M5.2 0.8 L0.8 5.2" stroke="#8a8a8a" stroke-width="0.9"/></svg>
</div>
</body>
</html>
